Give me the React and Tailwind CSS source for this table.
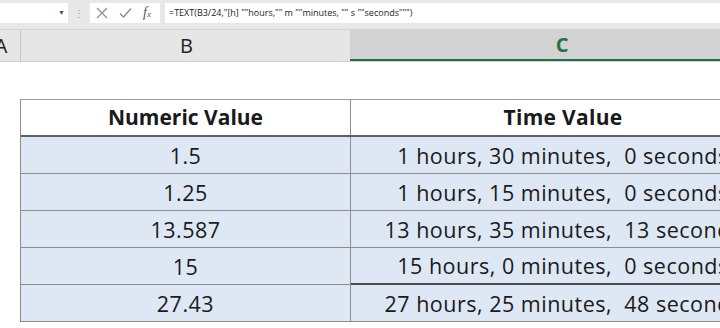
import React from "react";

const rows = [
  ["1.5", "1 hours, 30 minutes,  0 seconds"],
  ["1.25", "1 hours, 15 minutes,  0 seconds"],
  ["13.587", "13 hours, 35 minutes,  13 seconds"],
  ["15", "15 hours, 0 minutes,  0 seconds"],
  ["27.43", "27 hours, 25 minutes,  48 seconds"],
];

function FormulaBar() {
  return (
    <div className="h-[30px] bg-[#e8e8e8] flex items-start pt-[3px] border-b border-[#d4d4d4]">
      <div className="w-[68px] h-[20px] bg-white flex items-center justify-end pr-[3px]">
        <span className="text-[7px] text-[#555]">▼</span>
      </div>
      <div className="w-[22px] h-[20px] flex items-center justify-center text-[10px] text-[#9a9a9a]">⋮</div>
      <div className="w-[70px] h-[20px] bg-white flex items-center gap-[11px] pl-[6px]">
        <svg width="12" height="12" viewBox="0 0 12 12" stroke="#8a8a8a" strokeWidth="1.1" fill="none">
          <path d="M1 1 L11 11 M11 1 L1 11" />
        </svg>
        <svg width="13" height="12" viewBox="0 0 13 12" stroke="#8a8a8a" strokeWidth="1.3" fill="none">
          <path d="M1 6.5 L4.5 10 L12 1.5" />
        </svg>
        <span className="italic text-[14px] text-[#555] font-['Liberation_Serif',serif] leading-none">
          f<span className="text-[9px]">x</span>
        </span>
      </div>
      <div className="w-[5px]" />
      <div className="flex-1 h-[20px] bg-white flex items-center pl-[4px] text-[9px] text-[#222] whitespace-nowrap">
        =TEXT(B3/24,"[h] ""hours,"" m ""minutes, "" s ""seconds""")
      </div>
    </div>
  );
}

function ColumnHeaders() {
  return (
    <div className="h-[32px] flex bg-[#e6e6e6] border-b border-[#d0d0d0] text-[20px] text-[#222]">
      <div className="w-[21px] overflow-hidden border-r border-[#c8c8c8] flex items-center">
        <div className="w-[30px] -ml-[14px] shrink-0 text-center">A</div>
      </div>
      <div className="w-[329px] shrink-0 flex items-center justify-center pl-[2px]">B</div>
      <div className="w-[424px] shrink-0 flex items-center justify-center bg-[#d2d2d2] border-b-2 border-[#217346] text-[#217346] font-bold">
        C
      </div>
    </div>
  );
}

export default function App() {
  return (
    <div className="w-[720px] h-[328px] overflow-hidden bg-white font-['Open_Sans',sans-serif]">
      <div className="w-[800px]">
        <FormulaBar />
        <ColumnHeaders />
        <div className="h-[37px]" />
        <div className="ml-[20px] border-l border-[#8c8c8c] text-[#1a1a1a]">
          <div className="flex h-[38px] bg-white border-t border-[#9a9a9a] border-b-2 border-b-[#5e5e5e] font-bold text-[21px]">
            <div className="w-[330px] border-r border-[#8c8c8c] flex items-center justify-center">Numeric Value</div>
            <div className="w-[424px] flex items-center justify-center tracking-[0.3px]">Time Value</div>
          </div>
          {rows.map(([n, t], i) => (
            <div key={n} className="flex h-[37px] bg-[#dde8f4] border-b border-[#8c8c8c] text-[21.5px] tracking-[0.5px]">
              <div className="w-[330px] border-r border-[#8c8c8c] flex items-center justify-center pt-[2px]">{n}</div>
              <div className={`w-[424px] flex items-center justify-center whitespace-pre pt-[2px] ${i === 3 ? "border-b-2 border-[#4a4a4a] -mb-px" : ""}`}>
                {t}
              </div>
            </div>
          ))}
        </div>
      </div>
    </div>
  );
}
